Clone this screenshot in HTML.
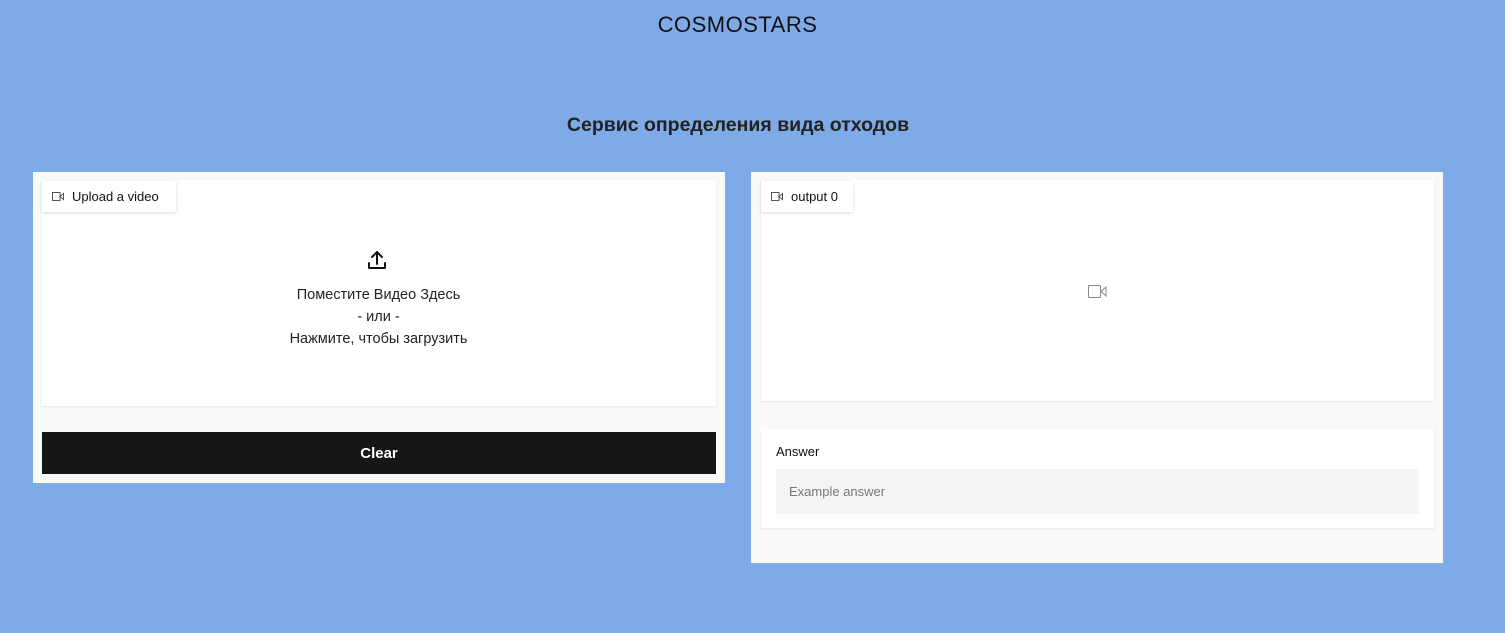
<!DOCTYPE html>
<html><head><meta charset="utf-8"><style>
*{box-sizing:border-box;margin:0;padding:0}
body{width:1505px;height:633px;background:#7eaae8;font-family:"Liberation Sans","DejaVu Sans",sans-serif;position:relative;overflow:hidden;color:#111}
.abs{position:absolute}
.panel{background:#f9f9f9}
.card{background:#fff;box-shadow:0 1px 2px rgba(0,0,0,.08)}
.tag{background:#fff;box-shadow:0 1px 3px rgba(0,0,0,.15);font-size:13px;display:flex;align-items:center;gap:8px;padding:0 10px;height:31px}
</style></head><body>
<div class="abs" style="left:0;width:1475px;top:12px;text-align:center;font-size:22px;letter-spacing:0.5px">COSMOSTARS</div>
<div class="abs" style="left:0;width:1476px;top:114px;text-align:center;font-size:19.5px;font-weight:bold;color:#222">Сервис определения вида отходов</div>

<div class="abs panel" style="left:33px;top:172px;width:692px;height:311px"></div>
<div class="abs card" style="left:41px;top:180px;width:675px;height:226px"></div>
<div class="abs tag" style="left:42px;top:181px;width:134px">
<svg width="12" height="9" viewBox="0 0 12 9"><rect x="0.5" y="0.5" width="7.5" height="8" fill="none" stroke="#555"/><path d="M8 4.5L11.5 1.5V7.5Z" fill="none" stroke="#555"/></svg>Upload a video</div>
<svg class="abs" style="left:366px;top:249px" width="22" height="22" viewBox="0 0 22 22" fill="none" stroke="#111" stroke-width="2" stroke-linecap="round" stroke-linejoin="round"><path d="M11 15V3M6 8l5-5 5 5M3 14v5h16v-5"/></svg>
<div class="abs" style="left:41px;width:675px;top:284px;text-align:center;font-size:14.5px;line-height:22px;color:#222">Поместите Видео Здесь<br>- или -<br>Нажмите, чтобы загрузить</div>
<div class="abs" style="left:42px;top:432px;width:674px;height:42px;background:#161616;color:#fff;font-weight:bold;font-size:15px;display:flex;align-items:center;justify-content:center">Clear</div>

<div class="abs panel" style="left:751px;top:172px;width:692px;height:391px"></div>
<div class="abs card" style="left:761px;top:180px;width:673px;height:221px"></div>
<div class="abs tag" style="left:761px;top:181px;width:92px">
<svg width="12" height="9" viewBox="0 0 12 9"><rect x="0.5" y="0.5" width="7.5" height="8" fill="none" stroke="#555"/><path d="M8 4.5L11.5 1.5V7.5Z" fill="none" stroke="#555"/></svg>output 0</div>
<svg class="abs" style="left:1088px;top:285px" width="19" height="13" viewBox="0 0 19 13"><rect x="0.5" y="0.5" width="12" height="12" rx="1" fill="none" stroke="#888"/><path d="M13 6.5L18 2V11Z" fill="none" stroke="#888"/></svg>
<div class="abs card" style="left:761px;top:429px;width:673px;height:99px"></div>
<div class="abs" style="left:776px;top:444px;font-size:13px">Answer</div>
<div class="abs" style="left:776px;top:469px;width:643px;height:45px;background:#f4f4f4;font-size:13px;color:#777;padding-left:13px;line-height:45px">Example answer</div>
</body></html>
